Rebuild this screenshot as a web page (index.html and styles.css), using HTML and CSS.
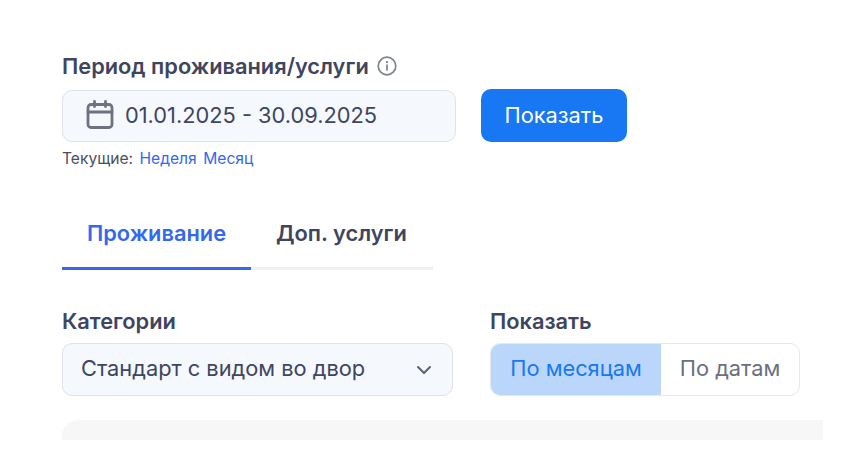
FILE: index.html
```html
<!DOCTYPE html>
<html lang="ru">
<head>
<meta charset="utf-8">
<title>Период проживания</title>
<link rel="stylesheet" href="styles.css">
</head>
<body>
<main class="page">
  <section class="period">
    <div class="field-label">Период проживания/услуги
      <svg class="info" viewBox="0 0 20 20" width="20" height="20" fill="none" stroke="#7b8290" stroke-width="1.7" stroke-linecap="round"><circle cx="10" cy="10" r="8.8"/><path d="M10 9v5"/><path d="M10 6v.2" stroke-width="2.1"/></svg>
    </div>
    <div class="period-row">
      <div class="date-input">
        <svg class="cal" viewBox="0 0 28 30" width="28" height="30" fill="none" stroke="#6f7180" stroke-width="2.8" stroke-linecap="round" stroke-linejoin="round"><rect x="2" y="4.5" width="24" height="23" rx="3"/><path d="M2 12h24"/><path d="M8.5 1.5v5"/><path d="M19.5 1.5v5"/></svg>
        <span>01.01.2025 - 30.09.2025</span>
      </div>
      <button class="show-btn">Показать</button>
    </div>
    <div class="presets"><span class="presets-label">Текущие:</span><a class="preset">Неделя</a><a class="preset">Месяц</a></div>
  </section>
  <nav class="tabs">
    <a class="tab tab-active">Проживание</a>
    <a class="tab">Доп. услуги</a>
  </nav>
  <section class="filters">
    <div class="filter-cat">
      <div class="field-label small">Категории</div>
      <div class="select"><span>Стандарт с видом во двор</span>
        <svg viewBox="0 0 16 10" width="16" height="10" fill="none" stroke="#5c6275" stroke-width="2" stroke-linecap="round" stroke-linejoin="round"><path d="M2 2l6 6 6-6"/></svg>
      </div>
    </div>
    <div class="filter-show">
      <div class="field-label small">Показать</div>
      <div class="segment"><span class="seg seg-on">По месяцам</span><span class="seg seg-off">По датам</span></div>
    </div>
  </section>
  <div class="panel"></div>
</main>
</body>
</html>
```
FILE: styles.css
```css
* { box-sizing: border-box; }
html, body { margin: 0; background: #fff; }
body { height: 467px; overflow: hidden; font-family: Inter, "Noto Sans", sans-serif; color: #3e4560; }
.page { padding: 54px 37px 0 62px; }
.field-label { display: flex; align-items: center; gap: 8px; height: 24px; font-size: 21.8px; font-weight: 600; color: #3e4560; }
.info { display: block; }
.period-row { display: flex; align-items: center; gap: 25px; margin-top: 11px; }
.date-input { display: flex; align-items: center; gap: 11px; width: 394px; height: 52px; padding: 0 0 2px 23px; background: #f5f8fd; border: 1px solid #dfe2ea; border-radius: 10px; font-size: 21.8px; color: #3e4560; }
.show-btn { width: 146px; height: 53px; border: 0; border-radius: 10px; background: #1877f2; color: #fff; font: 400 21.8px Inter, sans-serif; padding: 0 0 2px; }
.presets { display: flex; gap: 6.5px; margin-top: 7px; height: 18px; align-items: center; font-size: 15.6px; }
.presets-label { color: #4b4f5c; }
.preset { color: #3468ee; }
.tabs { display: flex; width: 371px; margin-top: 41px; border-bottom: 3px solid #f0f0f1; height: 62px; }
.tab { height: 62px; padding: 12px 25px 0; display: block; line-height: 26px; font-size: 21.8px; font-weight: 600; color: #3e4560; }
.tab-active { width: 189px; color: #3468ee; border-bottom: 3px solid #3468ee; flex: none; }
.filters { display: flex; gap: 37px; margin-top: 39px; }
.small { margin-bottom: 10px; }
.select { display: flex; align-items: center; justify-content: space-between; width: 391px; height: 53px; padding: 0 20px 3px 18px; background: #f5f8fd; border: 1px solid #dfe2ea; border-radius: 10px; font-size: 21.8px; }
.select svg { margin-top: 3px; }
.segment { display: flex; width: 310px; height: 53px; border: 1px solid #e5e7ec; border-radius: 10px; overflow: hidden; font-size: 21.8px; }
.seg { display: flex; align-items: center; justify-content: center; padding-bottom: 3px; }
.seg-on { width: 170px; background: #bbd6fb; color: #1877f2; }
.seg-off { flex: 1; color: #6a6f82; }
.panel { height: 20px; margin-top: 24px; background: #f7f7f7; border-radius: 16px 0 0 0; }
```
